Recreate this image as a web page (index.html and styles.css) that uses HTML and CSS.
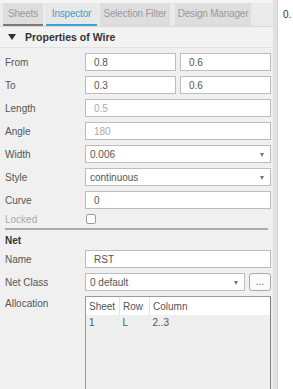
FILE: index.html
```html
<!DOCTYPE html>
<html lang="en">
<head>
  <meta charset="UTF-8">
  <title>Inspector</title>
  <link rel="stylesheet" href="styles.css">
</head>
<body>
<div class="app">
  <div class="dock">
    <div class="tabbar">
      <div class="tab tab-sheets">Sheets</div>
      <div class="tab tab-insp active">Inspector</div>
      <div class="tab tab-sel">Selection Filter</div>
      <div class="tab tab-dm">Design Manager</div>
    </div>

    <div class="section-head">
      <span class="caret"></span>
      <span>Properties of Wire</span>
    </div>

    <div class="props">
      <div class="row">
        <label>From</label>
        <div class="pair">
          <input class="field" value="0.8">
          <input class="field" value="0.6">
        </div>
      </div>
      <div class="row">
        <label>To</label>
        <div class="pair">
          <input class="field" value="0.3">
          <input class="field" value="0.6">
        </div>
      </div>
      <div class="row">
        <label>Length</label>
        <input class="field" value="0.5" disabled>
      </div>
      <div class="row">
        <label>Angle</label>
        <input class="field" value="180" disabled>
      </div>
      <div class="row">
        <label>Width</label>
        <div class="field combo">0.006</div>
      </div>
      <div class="row">
        <label>Style</label>
        <div class="field combo">continuous</div>
      </div>
      <div class="row">
        <label>Curve</label>
        <input class="field" value="0">
      </div>
      <div class="row row-check">
        <label class="muted">Locked</label>
        <span class="checkbox"></span>
      </div>

      <hr class="sep">

      <div class="group-title">Net</div>
      <div class="row">
        <label>Name</label>
        <input class="field" value="RST">
      </div>
      <div class="row">
        <label>Net Class</label>
        <div class="combo-btn">
          <div class="field combo">0 default</div>
          <button class="dots">...</button>
        </div>
      </div>
      <div class="row row-top">
        <label>Allocation</label>
        <div class="alloc">
          <table>
            <thead>
              <tr><th class="c1">Sheet</th><th class="c2">Row</th><th>Column</th></tr>
            </thead>
            <tbody>
              <tr><td>1</td><td>L</td><td>2..3</td></tr>
            </tbody>
          </table>
        </div>
      </div>
    </div>
  </div>
  <div class="splitter"></div>
  <div class="side">0.</div>
</div>
</body>
</html>
```

FILE: styles.css
```css
body {
  margin: 0;
  background: #f5f5f5;
  font-family: "Liberation Sans", Arial, sans-serif;
  font-size: 10px;
  color: #555;
}

.app {
  display: flex;
  height: 389px;
  overflow: hidden;
}

.dock {
  width: 273px;
  flex-shrink: 0;
  display: flex;
  flex-direction: column;
  padding-top: 3px;
}

/* tabs */
.tabbar {
  flex-shrink: 0;
  display: flex;
  height: 23px;
  background: #ebebeb;
  border-bottom: 1px solid #d8d8d8;
  padding-left: 3px;
  gap: 3px;
}
.tab {
  box-sizing: border-box;
  flex-shrink: 0;
  display: flex;
  align-items: center;
  justify-content: center;
  white-space: nowrap;
  background: #dedede;
  color: #9a9a9a;
  border-bottom: 2px solid transparent;
  letter-spacing: -0.2px;
}
.tab-sheets { width: 40px; border-bottom-color: #7a7a7a; }
.tab-insp { width: 51px; }
.tab-sel { width: 70px; }
.tab-dm { width: 76px; margin-left: 2px; }
.tab.active {
  background: #e8e8e8;
  color: #3b9fd1;
  border-bottom-color: #3aa4d8;
}

/* section header */
.section-head {
  flex-shrink: 0;
  display: flex;
  align-items: center;
  gap: 9px;
  height: 20px;
  padding-left: 8px;
  background: #f2f2f2;
  border-bottom: 1px solid #e2e2e2;
  font-weight: bold;
  font-size: 10.5px;
  color: #333;
}
.caret {
  width: 0;
  height: 0;
  border-left: 4px solid transparent;
  border-right: 4px solid transparent;
  border-top: 6px solid #333;
}

.props {
  flex: 1;
  min-height: 0;
  overflow: hidden;
  background: #f0f0f0;
  padding: 5px 2px 0 5px;
  display: flex;
  flex-direction: column;
  gap: 5px;
}
.props > * { flex-shrink: 0; }

.row {
  display: grid;
  grid-template-columns: 80px 1fr;
  align-items: center;
}
.row-top { align-items: start; }
.row-top label { padding-top: 2px; }

label { color: #555; }
.muted { color: #a8a8a8; }

.pair {
  display: grid;
  grid-template-columns: 1fr 1fr;
  gap: 4px;
}

.field {
  box-sizing: border-box;
  width: 100%;
  height: 18px;
  margin: 0;
  border: 1px solid #bdbdbd;
  background: #fff;
  padding: 0 8px;
  font: inherit;
  color: #555;
  outline: none;
}
.field:disabled { color: #aaa; }

.combo {
  display: flex;
  align-items: center;
  padding-left: 4px;
  position: relative;
}
.combo::after {
  content: "";
  position: absolute;
  right: 6px;
  top: 7px;
  border-left: 2.5px solid transparent;
  border-right: 2.5px solid transparent;
  border-top: 4px solid #777;
}

.row-check { height: 12px; margin-top: -1px; }
.checkbox {
  box-sizing: border-box;
  width: 10px;
  height: 10px;
  margin-left: 1px;
  border: 1px solid #9a9a9a;
  border-radius: 2px;
  background: #fff;
}

.sep {
  margin: -2px 3px 0 0;
  border: 0;
  border-top: 2px solid #ababab;
}

.group-title {
  font-weight: bold;
  color: #333;
  height: 10px;
  line-height: 12px;
}

.combo-btn {
  display: grid;
  grid-template-columns: 1fr 22px;
  gap: 4px;
}
.dots {
  box-sizing: border-box;
  height: 18px;
  padding: 0;
  border: 1px solid #a8a8a8;
  border-radius: 3px;
  background: #fafafa;
  font: inherit;
  color: #666;
  line-height: 12px;
}

.alloc {
  height: 120px;
  border: 1px solid #9a9a9a;
  border-right-color: #7c7c7c;
  background: #efefef;
}
.alloc table {
  width: 100%;
  border-collapse: collapse;
  color: #555;
}
.alloc th {
  background: #fff;
  font-weight: normal;
  text-align: left;
  height: 18px;
  padding: 0 3px;
  color: #555;
  border-right: 1px solid #e4e4e4;
}
.alloc th:last-child { border-right: 0; }
.alloc .c1 { width: 27px; }
.alloc .c2 { width: 23px; }
.alloc td {
  padding: 0 3px;
  height: 14px;
  color: #555;
}

.splitter {
  width: 4px;
  background: #e0e0e0;
}

.side {
  flex: 1;
  background: #fff;
  border-left: 1px solid #d4d4d4;
  padding: 9px 0 0 5px;
  color: #333;
}
```
